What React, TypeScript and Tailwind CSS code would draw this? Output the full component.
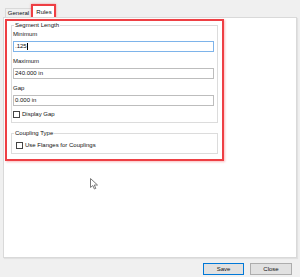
const font = "font-['Liberation_Sans',Arial,sans-serif]";

function Field({ label, value, focused }: { label: string; value: string; focused?: boolean }) {
  return (
    <>
      <div className="h-[8px] leading-[8px] mt-[5px] pl-[1px]">{label}</div>
      <div
        className={`mt-[3px] ml-[1px] w-[201px] h-[11px] flex items-center pl-[1px] bg-white border ${
          focused ? "border-[#7eb4ea]" : "border-[#bdbdbd]"
        }`}
      >
        <span>{value}</span>
        {focused && <span className="h-[7px] border-l border-black" />}
      </div>
    </>
  );
}

function Check({ label, className }: { label: string; className?: string }) {
  return (
    <div className={`flex items-center h-[8px] gap-[2px] ${className ?? ""}`}>
      <span className="w-[7px] h-[7px] border border-[#444] bg-white" />
      <span>{label}</span>
    </div>
  );
}

export default function App() {
  return (
    <div className={`${font} text-[6px] text-[#111] w-[300px] h-[277px] bg-[#f0f0f0] flex flex-col px-[3px] relative`}>
      {/* tabs */}
      <div className="h-[17px] flex items-end">
        <div className="ml-[2px] w-[27px] h-[9px] border border-b-0 border-[#d9d9d9] bg-[#f0f0f0] flex items-center justify-center leading-none">
          General
        </div>
        <div className="relative w-[24px] h-[12px] bg-white border border-b-0 border-[#d9d9d9] flex items-center justify-center leading-none">
          Rules
          <span className="absolute -left-[2px] -right-[1px] -top-[2px] -bottom-[2px] border-2 border-[#ee3f44] shadow-[0_0_2px_rgba(238,63,68,0.5)]" />
        </div>
      </div>

      {/* tab page */}
      <div className="relative h-[241px] bg-white border border-[#d9d9d9] shadow-[1px_1px_1px_rgba(0,0,0,0.06)]">
        <div className="ml-[1px] mt-[1px] w-[219px] h-[142px] border-2 border-[#ee3f44] shadow-[1px_1px_2px_rgba(238,63,68,0.35)] px-[4px]">
          <fieldset className="border border-[#dcdcdc] pb-[4px] pt-0">
            <legend className="ml-[2px] px-[1px] h-[8px] leading-[8px]">Segment Length</legend>
            <div className="-mt-[4px]" />
            <Field label="Minimum" value=".125" focused />
            <Field label="Maximum" value="240.000 in" />
            <Field label="Gap" value="0.000 in" />
            <Check label="Display Gap" className="mt-[4px] ml-[1px]" />
          </fieldset>
          <fieldset className="mt-[6px] border border-[#dcdcdc] pb-[4px]">
            <legend className="ml-[2px] px-[1px] h-[8px] leading-[8px]">Coupling Type</legend>
            <Check label="Use Flanges for Couplings" className="mt-[4px] ml-[4px]" />
          </fieldset>
        </div>

        <svg
          className="absolute left-[86px] top-[160px]"
          width="9"
          height="12"
          viewBox="0 0 9 12"
        >
          <path d="M0.5 0.5 L0.5 9.5 L2.8 7.5 L4.4 11 L5.8 10.4 L4.3 7 L7.5 7 Z" fill="#fff" stroke="#7a7a7a" strokeWidth="1" strokeLinejoin="round" />
        </svg>
      </div>

      {/* buttons */}
      <div className="mt-[5px] flex justify-end gap-[6px] pr-[5px]">
        <button className="w-[41px] h-[12px] bg-[#e1e1e1] border border-[#0078d7] leading-none">Save</button>
        <button className="w-[42px] h-[12px] bg-[#e1e1e1] border border-[#adadad] leading-none">Close</button>
      </div>
    </div>
  );
}
